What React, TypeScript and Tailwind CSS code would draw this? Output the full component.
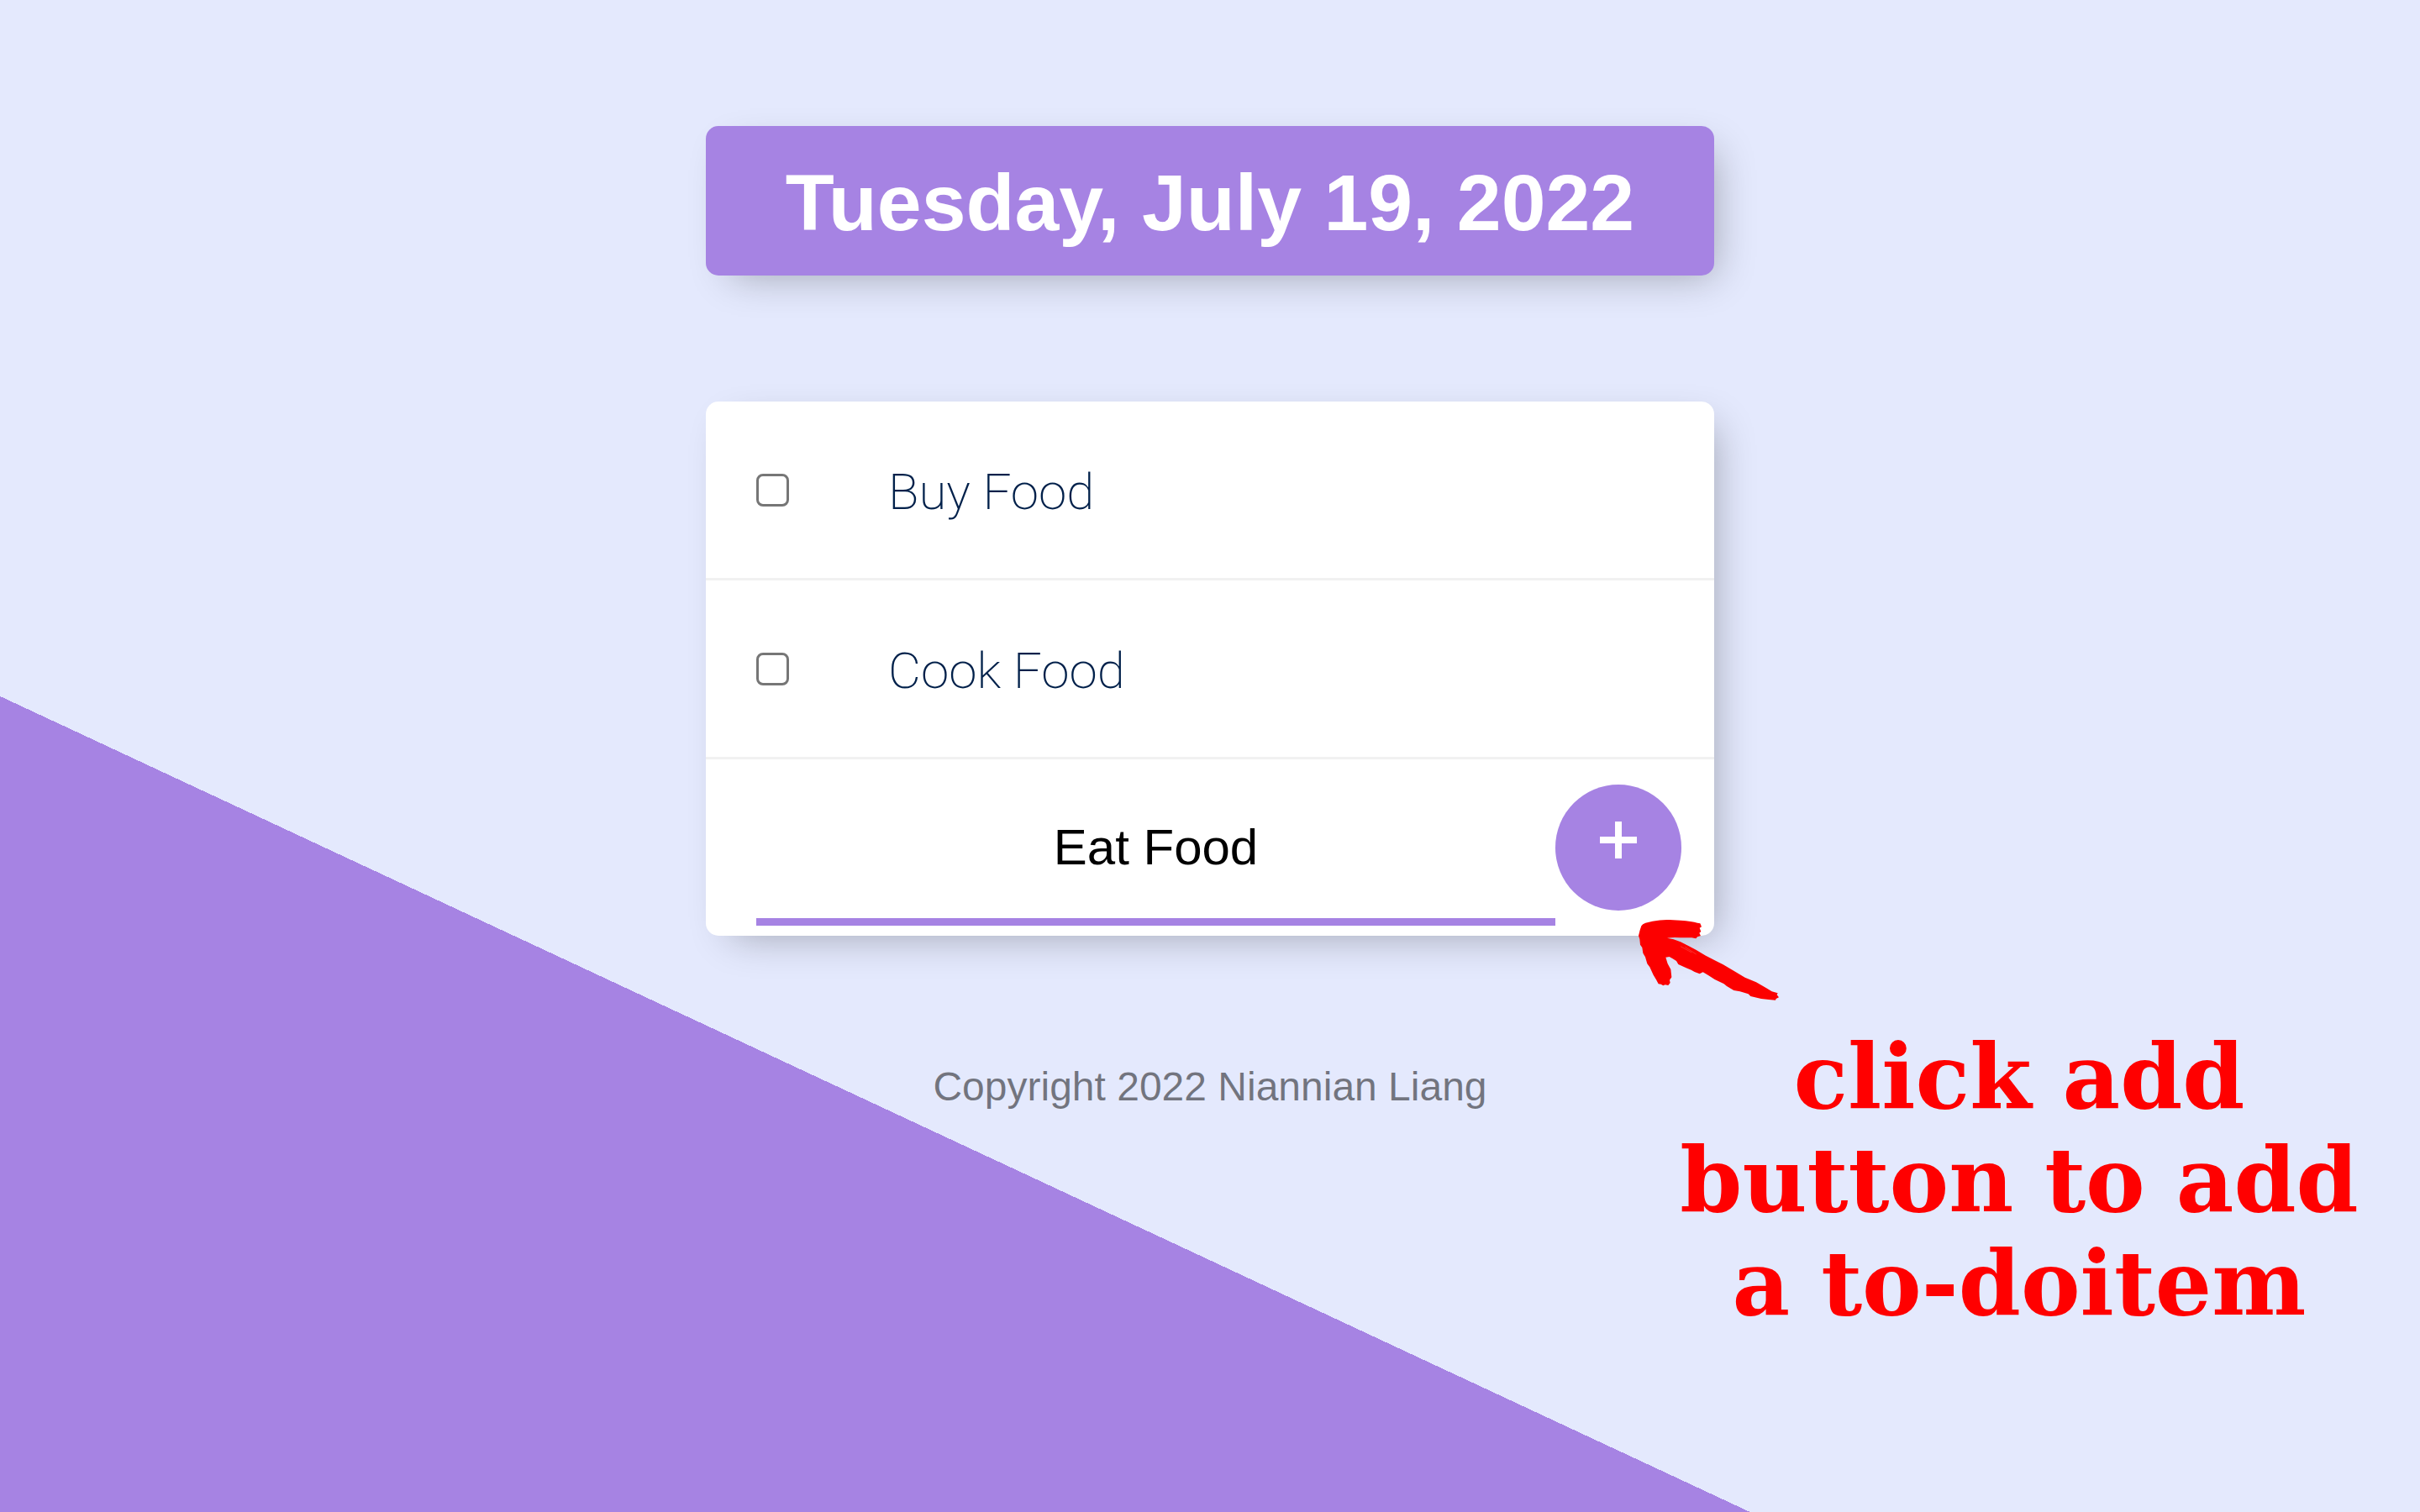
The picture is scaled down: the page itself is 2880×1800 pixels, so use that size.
const items = ["Buy Food", "Cook Food"];

function Arrow() {
  return (
    <svg
      aria-hidden="true"
      viewBox="450 640 501 291"
      className="absolute bottom-0 right-0 h-[97px] w-[167px] translate-x-[77px] translate-y-[77px] overflow-visible"
      fill="#fc0000"
    >
      <path d="M460 665 Q464 658 475 654 L500 648 Q530 642 560 643 L600 645 Q640 648 660 654 L670 656 L675 668 L668 672 L673 685 L667 690 L672 700 L660 704 L655 710 L640 707 L600 707 Q575 704 552 708 L575 713 L600 722 L628 736 L655 750 L690 771 L728 791 L752 803 L790 825 L830 849 L870 866 L905 886 L926 899 L947 905 L944 911 L951 920 L941 925 L939 930 L915 928 L888 925 L850 916 L842 908 L812 899 L790 895 L765 880 L755 872 L722 856 L700 842 L680 830 L668 836 L650 829 L638 822 L620 815 L592 802 L585 790 L572 782 L560 775 L547 777 L554 800 L565 820 L568 848 L561 858 L563 868 L556 877 L545 875 L538 878 L530 873 L521 872 L513 857 L503 840 L490 812 L481 800 L474 776 L466 762 L463 742 L456 732 L454 712 L450 700 L455 680 Z" />
      <path d="M600 738 L640 760 M616 740 L656 766" fill="none" stroke="#ff8a8a" strokeWidth="1" />
    </svg>
  );
}

export default function App() {
  return (
    <div className="min-h-screen overflow-hidden bg-[linear-gradient(25deg,#a683e3_30.9%,#e4e9fd_30.9%)] px-6 pt-[150px] font-['Liberation_Sans',Arial,sans-serif]">
      <main className="mx-auto flex max-w-[1200px] flex-col gap-[150px]">
        <header className="rounded-[15px] bg-[#a683e3] px-8 pb-[39px] pt-11 text-center shadow-[15px_15px_45px_-15px_rgba(0,0,0,0.3)]">
          <h1 className="text-[95px] font-bold leading-none text-white">Tuesday, July 19, 2022</h1>
        </header>

        <div className="relative">
          <section className="rounded-[15px] bg-white shadow-[15px_15px_45px_-15px_rgba(0,0,0,0.3)]">
            <ul>
              {items.map((item) => (
                <li key={item} className="border-b-3 border-[#f1f1f1]">
                  <label className="flex h-[210px] items-center gap-[118px] px-[60px]">
                    <input
                      type="checkbox"
                      className="size-[39px] shrink-0 appearance-none rounded-[8px] border-3 border-[#767676] bg-white checked:bg-[#a683e3]"
                    />
                    <span className="pt-1.5 font-[Roboto,sans-serif] text-[60px] font-extralight text-[#00204a]">{item}</span>
                  </label>
                </li>
              ))}
            </ul>
            <form className="flex h-[210px] items-center pl-[60px] pr-[39px]" onSubmit={(e) => e.preventDefault()}>
              <input
                type="text"
                aria-label="New item"
                defaultValue="Eat Food"
                autoComplete="off"
                className="mb-3 h-[180px] min-w-0 flex-1 self-end border-b-9 border-[#a683e3] bg-transparent pt-0.5 text-center text-[60px] text-black outline-none"
              />
              <button
                type="submit"
                aria-label="Add item"
                className="flex size-[150px] shrink-0 items-center justify-center rounded-full bg-[#a683e3] pb-[18px] text-white"
              >
                <svg aria-hidden="true" viewBox="0 0 44 44" className="size-11" stroke="currentColor" strokeWidth="8">
                  <path d="M22 0V44M0 22H44" />
                </svg>
              </button>
            </form>
          </section>

          <Arrow />
          <p className="absolute left-full top-full -ml-[77px] mt-[106px] w-[880px] whitespace-pre-line text-center font-['DejaVu_Serif',serif] text-[106px] font-bold leading-[123px] text-[#ff0000]">
            {"click add\nbutton to add\na to-doitem"}
          </p>
        </div>

        <footer className="text-center text-[48px] leading-[60px] text-black/50">Copyright 2022 Niannian Liang</footer>
      </main>
    </div>
  );
}
